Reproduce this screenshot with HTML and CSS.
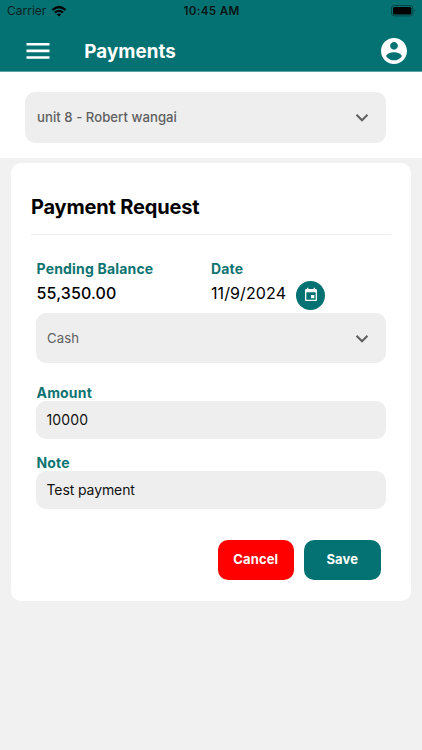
FILE: index.html
```html
<!DOCTYPE html>
<html lang="en">
<head>
<meta charset="utf-8">
<title>Payments</title>
<link rel="stylesheet" href="styles.css">
</head>
<body>
<header class="header">
  <div class="status">
    <div class="carrier"><span class="carrier-name">Carrier</span>
      <svg class="wifi" viewBox="0 0 16 12"><path d="M0.6 4.2Q8-2.8 15.4 4.2L13.8 5.8Q8 .5 2.2 5.8ZM3.2 6.8Q8 2.6 12.8 6.8L11.2 8.4Q8 5.7 4.8 8.4ZM5.8 9.3Q8 7.6 10.2 9.3L8 11.5Z"/></svg>
    </div>
    <time class="clock">10:45 AM</time>
    <svg class="battery" viewBox="0 0 25 12"><rect x=".5" y=".5" width="21.3" height="10.4" rx="2.8" fill="none" stroke="#000" stroke-opacity=".4"/><rect x="2" y="2" width="18.3" height="7.4" rx="1.5"/><path d="M23 4q1.5 1.7 0 3.4z" fill-opacity=".5"/></svg>
  </div>
  <nav class="nav">
    <svg class="menu" viewBox="0 0 24 16"><path d="M.5 0h23v2.6H.5zM.5 6.6h23v2.6H.5zM.5 13.2h23v2.6H.5z"/></svg>
    <h1 class="title">Payments</h1>
    <svg class="account" viewBox="2 2 20 20"><path d="M12 2C6.48 2 2 6.48 2 12s4.48 10 10 10 10-4.48 10-10S17.52 2 12 2zm0 3c1.66 0 3 1.34 3 3s-1.34 3-3 3-3-1.34-3-3 1.34-3 3-3zm0 14.2c-2.5 0-4.71-1.28-6-3.22.03-1.99 4-3.08 6-3.08 1.99 0 5.97 1.09 6 3.08-1.29 1.94-3.5 3.22-6 3.22z"/></svg>
  </nav>
</header>
<section class="unit-bar">
  <div class="select"><span class="unit-name">unit 8 - Robert wangai</span><svg class="chevron" viewBox="0 0 14 9"><path d="M1.5 1.7L7 7.2L12.5 1.7"/></svg></div>
</section>
<main class="card">
  <h2 class="heading"><span>Payment Request</span></h2>
  <form class="form">
    <div class="summary">
      <div class="balance"><div class="label balance-label">Pending Balance</div><div class="value balance-value">55,350.00</div></div>
      <div class="date"><div class="label date-label">Date</div>
        <div class="date-row"><span class="value date-value">11/9/2024</span>
        <span class="calendar"><svg viewBox="0 0 24 24"><path d="M17 12h-5v5h5v-5zM16 1v2H8V1H6v2H5c-1.11 0-1.99.9-1.99 2L3 19c0 1.1.89 2 2 2h14c1.1 0 2-.9 2-2V5c0-1.1-.9-2-2-2h-1V1h-2zm3 18H5V8h14v11z"/></svg></span></div>
      </div>
    </div>
    <div class="select method"><span class="method-name">Cash</span><svg class="chevron" viewBox="0 0 14 9"><path d="M1.5 1.7L7 7.2L12.5 1.7"/></svg></div>
    <div class="label field-label amount-label">Amount</div>
    <div class="input"><span class="amount">10000</span></div>
    <div class="label field-label note-label">Note</div>
    <div class="input"><span class="note">Test payment</span></div>
    <div class="actions"><button type="button" class="button cancel">Cancel</button><button type="button" class="button save">Save</button></div>
  </form>
</main>
</body>
</html>
```
FILE: styles.css
```css
* { box-sizing: border-box; }
body { margin: 0; min-height: 750px; background: #f1f1f1; font-family: Inter, "Liberation Sans", sans-serif; color: #000; }
svg { display: block; flex: none; }
h1, h2 { margin: 0; }
.header { height: 72px; background: #047272; border-bottom: 1px solid #5ca3a3; }
.status { display: grid; grid-template-columns: 1fr auto 1fr; height: 22px; padding: 0 6px 0 7px; align-items: center; }
.carrier { display: flex; align-items: center; gap: 4.5px; font-size: 12px; letter-spacing: 0; color: #0b1f1f; }
.carrier-name { margin-top: -1px; }
.wifi { width: 16px; height: 12px; margin-top: -1px; fill: #000; }
.clock { font-size: 11.7px; font-weight: 600; letter-spacing: .3px; color: #041616; }
.battery { width: 25px; height: 12px; justify-self: end; }
.nav { display: flex; align-items: center; height: 49px; padding: 9px 15.5px 0 26px; }
.menu { width: 24px; height: 16px; fill: #fff; }
.title { margin-left: 34.3px; padding-top: 2px; font-size: 18.8px; line-height: 24px; font-weight: 650; letter-spacing: .05px; color: #fff; }
.account { width: 26px; height: 26px; margin-left: auto; fill: #fff; }
.unit-bar { height: 86px; padding: 20px 36px 0 25px; background: #fff; }
.select { display: flex; align-items: center; justify-content: space-between; height: 51px; padding: 0 17px 0 12px; border-radius: 10px; background: #eee; color: #606060; font-size: 13.2px; letter-spacing: .09px; }
.unit-name { margin-top: -1px; font-weight: 450; letter-spacing: .02px; }
.chevron { width: 14px; height: 9px; fill: none; stroke: #606060; stroke-width: 2.1; }
.card { width: 400px; height: 437.5px; margin: 5px 0 0 11px; padding: 25px 20px 0; border-radius: 10px; background: #fff; }
.heading { height: 47px; border-bottom: 1px solid #eee; font-size: 20px; line-height: 38px; font-weight: 650; letter-spacing: -.18px; }
.form { padding: 0 5px; }
.summary { display: grid; grid-template-columns: 175px 1fr; height: 78px; padding-top: 24px; }
.label { font-size: 14px; line-height: 20px; font-weight: 650; letter-spacing: .18px; color: #0e7471; }
.balance, .field-label { padding-left: .5px; }
.value { font-size: 16px; line-height: 28px; letter-spacing: .1px; }
.balance-value { font-weight: 500; letter-spacing: .15px; }
.date-row { display: flex; gap: 10px; }
.calendar { display: grid; place-items: center; width: 29px; height: 29px; margin-top: 2px; border-radius: 50%; background: #047272; }
.calendar svg { width: 16px; height: 16px; margin-top: -2px; fill: #fff; }
.method { height: 50px; padding: 0 17px 0 11px; }
.field-label { height: 38px; padding-top: 20px; }
.note-label { height: 32.5px; padding-top: 14px; }
.input { display: flex; align-items: center; height: 37.5px; padding-left: 10.5px; border-radius: 10px; background: #eee; font-size: 14px; color: #111; }
.amount { letter-spacing: .15px; }
.note { letter-spacing: -.1px; }
.actions { display: flex; justify-content: flex-end; gap: 10px; padding: 31px 5.5px 0 0; }
.button { width: 76.5px; height: 40.5px; border: 0; border-radius: 10px; padding: 0 0 2px; font: 650 13px/38px Inter, sans-serif; letter-spacing: .15px; color: #fff; }
.cancel { background: #f00; }
.save { background: #047272; }
```
